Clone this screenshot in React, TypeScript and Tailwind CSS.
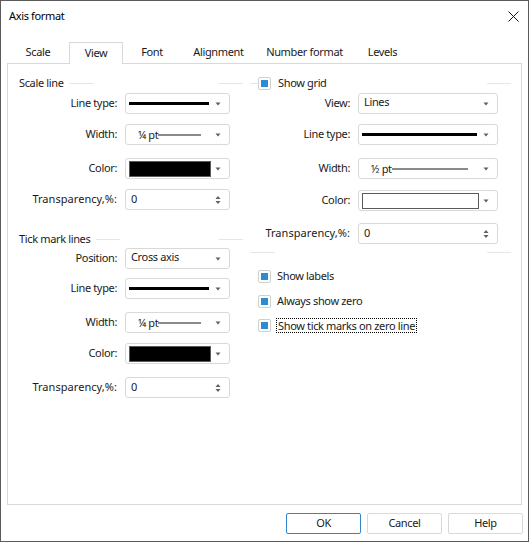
import React from "react";

const font = { fontFamily: '"Noto Sans", "Liberation Sans", sans-serif' };

const Arrow = () => (
  <svg width="6" height="4" viewBox="0 0 6 4" className="shrink-0">
    <path d="M0.5 0.5h5L3 3.5z" fill="#606060" />
  </svg>
);

const Spinner = () => (
  <svg width="6" height="10" viewBox="0 0 6 10" className="shrink-0">
    <path d="M3 1L5.5 4h-5z" fill="#606060" />
    <path d="M0.5 6h5L3 9z" fill="#606060" />
  </svg>
);

const Box = ({ w, children }: { w: string; children: React.ReactNode }) => (
  <div className={`flex h-[21px] shrink-0 items-center rounded-[3px] border border-[#d9d9d9] bg-white pl-[2px] pr-[8px] ${w}`}>
    {children}
  </div>
);

const Row = ({
  label,
  lw,
  children,
  className,
  wide,
}: {
  label: string;
  lw: string;
  children: React.ReactNode;
  className: string;
  wide?: boolean;
}) => (
  <div className={`flex items-center ${className}`}>
    <div className={`${lw} shrink-0 pr-[8px] text-right text-[#1a1a1a] ${wide ? "tracking-[0.05px]" : ""}`}>
      {label}
    </div>
    {children}
  </div>
);

const LineType = ({ w, len }: { w: string; len: string }) => (
  <Box w={w}>
    <div className={`ml-[1px] h-[3px] bg-black ${len}`} />
    <div className="flex-1" />
    <Arrow />
  </Box>
);

const WidthSel = ({ w, text, len }: { w: string; text: string; len: string }) => (
  <Box w={w}>
    <span className="ml-[10px] leading-none text-[#1a1a1a]">{text}</span>
    <div className={`h-[2px] bg-[#8a8a8a] ${len}`} />
    <div className="flex-1" />
    <Arrow />
  </Box>
);

const ColorSel = ({ w, swatch }: { w: string; swatch: string }) => (
  <Box w={w}>
    <div className={`ml-[1px] h-[16px] border border-[#5a5a5a] ${swatch}`} />
    <div className="flex-1" />
    <Arrow />
  </Box>
);

const TextSel = ({ w, text }: { w: string; text: string }) => (
  <Box w={w}>
    <span className="-mt-[3px] ml-[3px] text-[#1a1a1a]">{text}</span>
    <div className="flex-1" />
    <Arrow />
  </Box>
);

const Spin = ({ w }: { w: string }) => (
  <Box w={w}>
    <span className="ml-[3px] text-[#1a1a1a]">0</span>
    <div className="flex-1" />
    <Spinner />
  </Box>
);

const Check = () => (
  <div className="flex h-[13px] w-[13px] shrink-0 items-center justify-center rounded-[2px] border border-[#cfcfcf] bg-white">
    <div className="h-[7px] w-[7px] bg-[#2b8bd3]" />
  </div>
);

const GroupHead = ({ title, first }: { title: string; first: string }) => (
  <div className="flex h-[16px] items-center pl-[11px] pr-[7px]">
    <span className="text-[#1a1a1a]">{title}</span>
    <div className={`h-px bg-[#e6e6e6] ${first}`} />
    <div className="flex-1" />
    <div className="h-px w-[24px] bg-[#e6e6e6]" />
  </div>
);

const tabs = [
  { t: "Scale", w: "w-[62px]" },
  { t: "View", w: "w-[54px]", active: true },
  { t: "Font", w: "w-[58px]" },
  { t: "Alignment", w: "w-[75px]" },
  { t: "Number format", w: "w-[97px]" },
  { t: "Levels", w: "w-[59px]" },
];

export default function App() {
  return (
    <div
      className="flex h-[542px] w-[529px] flex-col border border-[#5b5b5b] bg-white text-[11px] tracking-[-0.35px] text-[#1a1a1a]"
      style={font}
    >
      {/* title bar */}
      <div className="flex h-[31px] shrink-0 items-center justify-between pl-[8px] pr-[9px]">
        <span className="text-black">Axis format</span>
        <svg width="11" height="11" viewBox="0 0 11 11">
          <path d="M0.5 0.5l10 10M10.5 0.5l-10 10" stroke="#111" strokeWidth="1" />
        </svg>
      </div>

      {/* tabs */}
      <div className="mt-[10px] flex h-[21px] shrink-0 items-end pl-[6px]">
        {tabs.map((tab) =>
          tab.active ? (
            <div
              key={tab.t}
              className={`relative z-10 -mb-px flex h-[22px] items-center justify-center border border-b-0 border-[#d9d9d9] bg-white ${tab.w}`}
            >
              {tab.t}
            </div>
          ) : (
            <div key={tab.t} className={`flex h-[21px] items-center justify-center ${tab.w}`}>
              {tab.t}
            </div>
          )
        )}
      </div>

      {/* panel */}
      <div className="mx-[6px] flex h-[442px] shrink-0 border border-[#d9d9d9]">
        {/* left column */}
        <div className="flex w-[242px] shrink-0 flex-col pt-[11px]">
          <GroupHead title="Scale line" first="ml-[6px] w-[24px]" />
          <Row label="Line type:" lw="w-[117px]" className="mt-[2px]">
            <LineType w="w-[105px]" len="w-[80px]" />
          </Row>
          <Row label="Width:" lw="w-[117px]" className="mt-[10px]">
            <WidthSel w="w-[105px]" text="¼ pt" len="w-[43px]" />
          </Row>
          <Row label="Color:" lw="w-[117px]" className="mt-[13px]">
            <ColorSel w="w-[105px]" swatch="w-[82px] bg-black" />
          </Row>
          <Row label="Transparency,%:" lw="w-[117px]" className="mt-[10px]" wide>
            <Spin w="w-[105px]" />
          </Row>

          <div className="mt-[21px]">
            <GroupHead title="Tick mark lines" first="ml-[6px] w-[24px]" />
          </div>
          <Row label="Position:" lw="w-[117px]" className="mt-[1px]">
            <TextSel w="w-[105px]" text="Cross axis" />
          </Row>
          <Row label="Line type:" lw="w-[117px]" className="mt-[9px]">
            <LineType w="w-[105px]" len="w-[80px]" />
          </Row>
          <Row label="Width:" lw="w-[117px]" className="mt-[13px]">
            <WidthSel w="w-[105px]" text="¼ pt" len="w-[43px]" />
          </Row>
          <Row label="Color:" lw="w-[117px]" className="mt-[10px]">
            <ColorSel w="w-[105px]" swatch="w-[82px] bg-black" />
          </Row>
          <Row label="Transparency,%:" lw="w-[117px]" className="mt-[13px]" wide>
            <Spin w="w-[105px]" />
          </Row>
        </div>

        {/* right column */}
        <div className="flex flex-1 flex-col pt-[11px] pr-[10px]">
          <div className="flex h-[16px] items-center">
            <div className="h-px w-[8px] bg-[#e6e6e6]" />
            <Check />
            <span className="ml-[7px]">Show grid</span>
            <div className="flex-1" />
            <div className="h-px w-[24px] bg-[#e6e6e6]" />
          </div>
          <Row label="View:" lw="w-[108px]" className="mt-[2px]">
            <TextSel w="w-[140px]" text="Lines" />
          </Row>
          <Row label="Line type:" lw="w-[108px]" className="mt-[10px]">
            <LineType w="w-[140px]" len="w-[115px]" />
          </Row>
          <Row label="Width:" lw="w-[108px]" className="mt-[13px]">
            <WidthSel w="w-[140px]" text="½ pt" len="w-[76px]" />
          </Row>
          <Row label="Color:" lw="w-[108px]" className="mt-[11px]">
            <ColorSel w="w-[140px]" swatch="w-[117px] bg-white" />
          </Row>
          <Row label="Transparency,%:" lw="w-[108px]" className="mt-[12px]" wide>
            <Spin w="w-[140px]" />
          </Row>
          <div className="mt-[8px] flex h-px">
            <div className="w-[25px] bg-[#e6e6e6]" />
            <div className="flex-1" />
            <div className="w-[24px] bg-[#e6e6e6]" />
          </div>
          <div className="ml-[8px] mt-[15px] flex h-[16px] items-center">
            <Check />
            <span className="ml-[6px]">Show labels</span>
          </div>
          <div className="ml-[8px] mt-[9px] flex h-[16px] items-center">
            <Check />
            <span className="ml-[6px]">Always show zero</span>
          </div>
          <div className="ml-[8px] mt-[8px] flex h-[16px] items-center">
            <Check />
            <span className="ml-[5px] border border-dotted border-black px-px leading-[13px]">
              Show tick marks on zero line
            </span>
          </div>
        </div>
      </div>

      {/* buttons */}
      <div className="mt-[8px] flex justify-end gap-[6px] pr-[5px]">
        <button className="h-[21px] w-[75px] rounded-[2px] border border-[#2f86cf] bg-white text-[#1a1a1a]">
          OK
        </button>
        <button className="h-[21px] w-[75px] rounded-[2px] border border-[#d9d9d9] bg-white text-[#1a1a1a]">
          Cancel
        </button>
        <button className="h-[21px] w-[75px] rounded-[2px] border border-[#d9d9d9] bg-white text-[#1a1a1a]">
          Help
        </button>
      </div>
    </div>
  );
}
